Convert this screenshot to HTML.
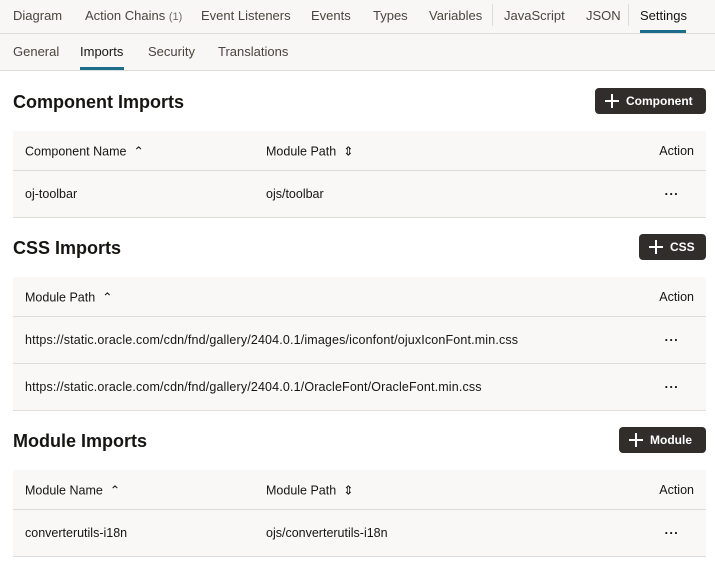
<!DOCTYPE html>
<html><head><meta charset="utf-8"><style>
*{box-sizing:border-box;margin:0;padding:0}
body{width:715px;height:569px;overflow:hidden;background:#fff;font-family:"Liberation Sans",sans-serif;color:#161513;position:relative}
.bar1{position:absolute;left:0;top:0;width:715px;height:34px;background:#f8f7f5;border-bottom:1px solid #dedcd9}
.bar2{position:absolute;left:0;top:34px;width:715px;height:37px;background:#f8f7f5;border-bottom:1px solid #dedcd9}
.t{position:absolute;font-size:13px;color:#49453f;white-space:nowrap}
.sel{color:#161513}
.ul{position:absolute;height:3px;background:#1c6c8c}
.sep{position:absolute;top:4px;width:1px;height:22px;background:#dedcd9}
h2{position:absolute;left:13px;font-size:18px;font-weight:bold}
.btn{position:absolute;height:26px;background:#312d2a;border-radius:4px;color:#fff;font-size:12px;font-weight:bold;line-height:26px;padding-left:31px}
.btn:before{content:"";position:absolute;left:10px;top:6px;width:14px;height:14px;background:linear-gradient(#fff,#fff) center/14px 2px no-repeat,linear-gradient(#fff,#fff) center/2px 14px no-repeat}
.tbl{position:absolute;left:13px;width:693px;background:#f9f8f6}
.row{position:relative;border-bottom:1px solid #dedcd9;font-size:12.5px}
.hd{height:40px}
.dr{height:47px}
.row span{position:absolute;top:50%;transform:translateY(-50%);white-space:nowrap}
.hd span{font-size:12.5px}
.c1{left:12px}.c2{left:253px}.ca{right:12px}
.url{font-size:12.5px;letter-spacing:0.15px}
.dots{right:27px;letter-spacing:0.5px;font-size:13px;font-weight:bold}
</style></head><body>
<div class="bar1"></div>
<span class="t" style="left:13px;top:8px">Diagram</span>
<span class="t" style="left:85px;top:8px">Action Chains <span style="color:#6f6b66;font-size:11px">(1)</span></span>
<span class="t" style="left:201px;top:8px">Event Listeners</span>
<span class="t" style="left:311px;top:8px">Events</span>
<span class="t" style="left:373px;top:8px">Types</span>
<span class="t" style="left:429px;top:8px">Variables</span>
<div class="sep" style="left:492px"></div>
<span class="t" style="left:504px;top:8px">JavaScript</span>
<span class="t" style="left:586px;top:8px">JSON</span>
<div class="sep" style="left:628px"></div>
<span class="t sel" style="left:640px;top:8px">Settings</span>
<div class="ul" style="left:640px;top:30px;width:46px"></div>
<div class="bar2"></div>
<span class="t" style="left:13px;top:44px">General</span>
<span class="t sel" style="left:80px;top:44px">Imports</span>
<div class="ul" style="left:80px;top:67px;width:44px"></div>
<span class="t" style="left:148px;top:44px">Security</span>
<span class="t" style="left:218px;top:44px">Translations</span>

<h2 style="top:92px">Component Imports</h2>
<div class="btn" style="left:595px;top:88px;width:111px">Component</div>
<div class="tbl" style="top:131px">
<div class="row hd"><span class="c1">Component Name &nbsp;&#8963;</span><span class="c2">Module Path &nbsp;&#8661;</span><span class="ca">Action</span></div>
<div class="row dr"><span class="c1">oj-toolbar</span><span class="c2">ojs/toolbar</span><span class="dots">···</span></div>
</div>

<h2 style="top:238px">CSS Imports</h2>
<div class="btn" style="left:639px;top:234px;width:67px">CSS</div>
<div class="tbl" style="top:277px">
<div class="row hd"><span class="c1">Module Path &nbsp;&#8963;</span><span class="ca">Action</span></div>
<div class="row dr"><span class="c1 url">https://static.oracle.com/cdn/fnd/gallery/2404.0.1/images/iconfont/ojuxIconFont.min.css</span><span class="dots">···</span></div>
<div class="row dr"><span class="c1 url">https://static.oracle.com/cdn/fnd/gallery/2404.0.1/OracleFont/OracleFont.min.css</span><span class="dots">···</span></div>
</div>

<h2 style="top:431px">Module Imports</h2>
<div class="btn" style="left:619px;top:427px;width:87px">Module</div>
<div class="tbl" style="top:470px">
<div class="row hd"><span class="c1">Module Name &nbsp;&#8963;</span><span class="c2">Module Path &nbsp;&#8661;</span><span class="ca">Action</span></div>
<div class="row dr"><span class="c1">converterutils-i18n</span><span class="c2">ojs/converterutils-i18n</span><span class="dots">···</span></div>
</div>
</body></html>
